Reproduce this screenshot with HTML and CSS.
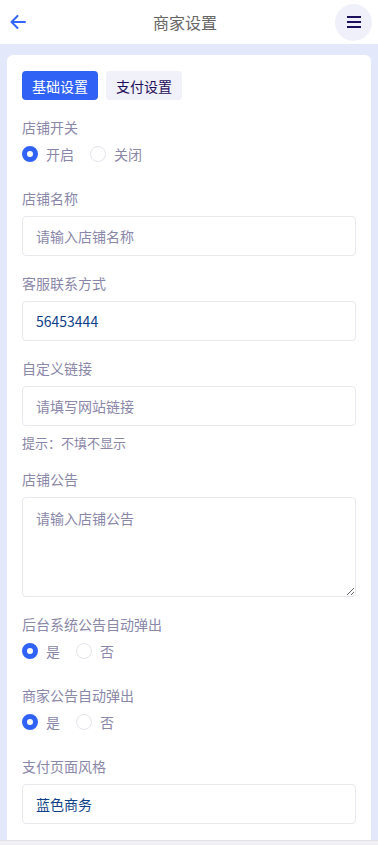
FILE: index.html
```html
<!DOCTYPE html>
<html lang="zh-CN">
<head>
<meta charset="utf-8">
<meta name="viewport" content="width=device-width, initial-scale=1">
<title>商家设置</title>
<link rel="stylesheet" href="styles.css">
</head>
<body>
<header class="topbar">
  <a class="back" href="#" aria-label="返回">
    <svg width="16" height="14" viewBox="0 0 16 14"><path d="M15 7H1.5M7.5 1L1.5 7l6 6" fill="none" stroke="#3366ff" stroke-width="2" stroke-linecap="round" stroke-linejoin="round"/></svg>
  </a>
  <h1 class="title">商家设置</h1>
  <button class="menu" aria-label="菜单">
    <svg width="14" height="14" viewBox="0 0 14 14"><path d="M0 2h14M0 7h14M0 12h14" stroke="#1e0f5c" stroke-width="2.2"/></svg>
  </button>
</header>

<main class="page">
  <section class="card">
    <div class="tabs">
      <button class="tab active">基础设置</button>
      <button class="tab">支付设置</button>
    </div>

    <div class="group radio-group">
      <div class="label">店铺开关</div>
      <div class="radios">
        <label class="radio"><span class="dot on"></span>开启</label>
        <label class="radio"><span class="dot"></span>关闭</label>
      </div>
    </div>

    <div class="group">
      <div class="label">店铺名称</div>
      <input class="field" type="text" placeholder="请输入店铺名称">
    </div>

    <div class="group">
      <div class="label">客服联系方式</div>
      <input class="field" type="text" value="56453444">
    </div>

    <div class="group">
      <div class="label">自定义链接</div>
      <input class="field" type="text" placeholder="请填写网站链接">
      <div class="hint">提示：不填不显示</div>
    </div>

    <div class="group">
      <div class="label">店铺公告</div>
      <textarea class="field area" placeholder="请输入店铺公告"></textarea>
    </div>

    <div class="group radio-group">
      <div class="label">后台系统公告自动弹出</div>
      <div class="radios">
        <label class="radio"><span class="dot on"></span>是</label>
        <label class="radio"><span class="dot"></span>否</label>
      </div>
    </div>

    <div class="group radio-group">
      <div class="label">商家公告自动弹出</div>
      <div class="radios">
        <label class="radio"><span class="dot on"></span>是</label>
        <label class="radio"><span class="dot"></span>否</label>
      </div>
    </div>

    <div class="group">
      <div class="label">支付页面风格</div>
      <input class="field" type="text" value="蓝色商务">
    </div>
  </section>
</main>
<div class="bottombar"></div>
</body>
</html>
```

FILE: styles.css
```css
* { box-sizing: border-box; }
html, body { margin: 0; padding: 0; }
body {
  background: #e4e8fb;
  font-family: "Noto Sans CJK SC", "Noto Sans", sans-serif;
  font-size: 14px;
  color: #8a87a8;
}
.topbar {
  height: 44px;
  background: #fff;
  display: flex;
  align-items: center;
  padding: 0 6px 0 10px;
}
.back {
  width: 25px;
  display: flex;
  align-items: center;
  height: 20px;
}
.title {
  flex: 1;
  margin: 0;
  text-align: center;
  font-size: 16px;
  font-weight: 400;
  color: #666;
  line-height: 20px;
}
.menu {
  width: 37px;
  height: 37px;
  border-radius: 50%;
  border: 0;
  background: #f0f0fa;
  display: flex;
  align-items: center;
  justify-content: center;
  padding: 0;
}
.page {
  padding: 11px 7px 0;
}
.card {
  background: #fff;
  border-radius: 6px 6px 0 0;
  padding: 16px 15px 20px;
}
.tabs {
  display: flex;
  gap: 8px;
  margin-bottom: 17px;
}
.tab {
  height: 29px;
  padding: 0 10px;
  border: 0;
  border-radius: 4px;
  font-family: inherit;
  font-size: 14px;
  background: #f1f1fa;
  color: #1e0f5c;
}
.tab.active {
  background: #3062f5;
  color: #fff;
}
.group {
  margin-bottom: 17px;
}
.label {
  line-height: 20px;
  margin-bottom: 8px;
  color: #8a87a8;
}
.radio-group .label { margin-bottom: 7px; }
.radio-group { margin-bottom: 24px; }
.radios {
  display: flex;
  height: 20px;
  align-items: center;
}
.radio {
  display: flex;
  align-items: center;
  gap: 8px;
  margin-right: 16px;
  line-height: 20px;
  color: #8a87a8;
}
.dot {
  width: 16px;
  height: 16px;
  border-radius: 50%;
  border: 1px solid #e4e4ec;
  background: #fff;
}
.dot.on {
  border: 5px solid #3062f5;
}
.field {
  display: block;
  width: 100%;
  height: 40px;
  border: 1px solid #e8e8ee;
  border-radius: 4px;
  padding: 0 13px;
  font-family: inherit;
  font-size: 14px;
  color: #0e3f88;
  background: #fff;
  outline: none;
}
.field::placeholder { color: #8a87a8; opacity: 1; }
.area {
  height: 100px;
  padding: 10px 13px;
  line-height: 20px;
  resize: vertical;
}
.hint {
  margin-top: 8px;
  font-size: 13px;
  line-height: 18px;
  color: #8a87a8;
}
.bottombar {
  position: fixed;
  left: 0;
  right: 0;
  bottom: 0;
  height: 5px;
  background: #f1f1f3;
  border-top: 1px solid #e2e2e6;
}
```
